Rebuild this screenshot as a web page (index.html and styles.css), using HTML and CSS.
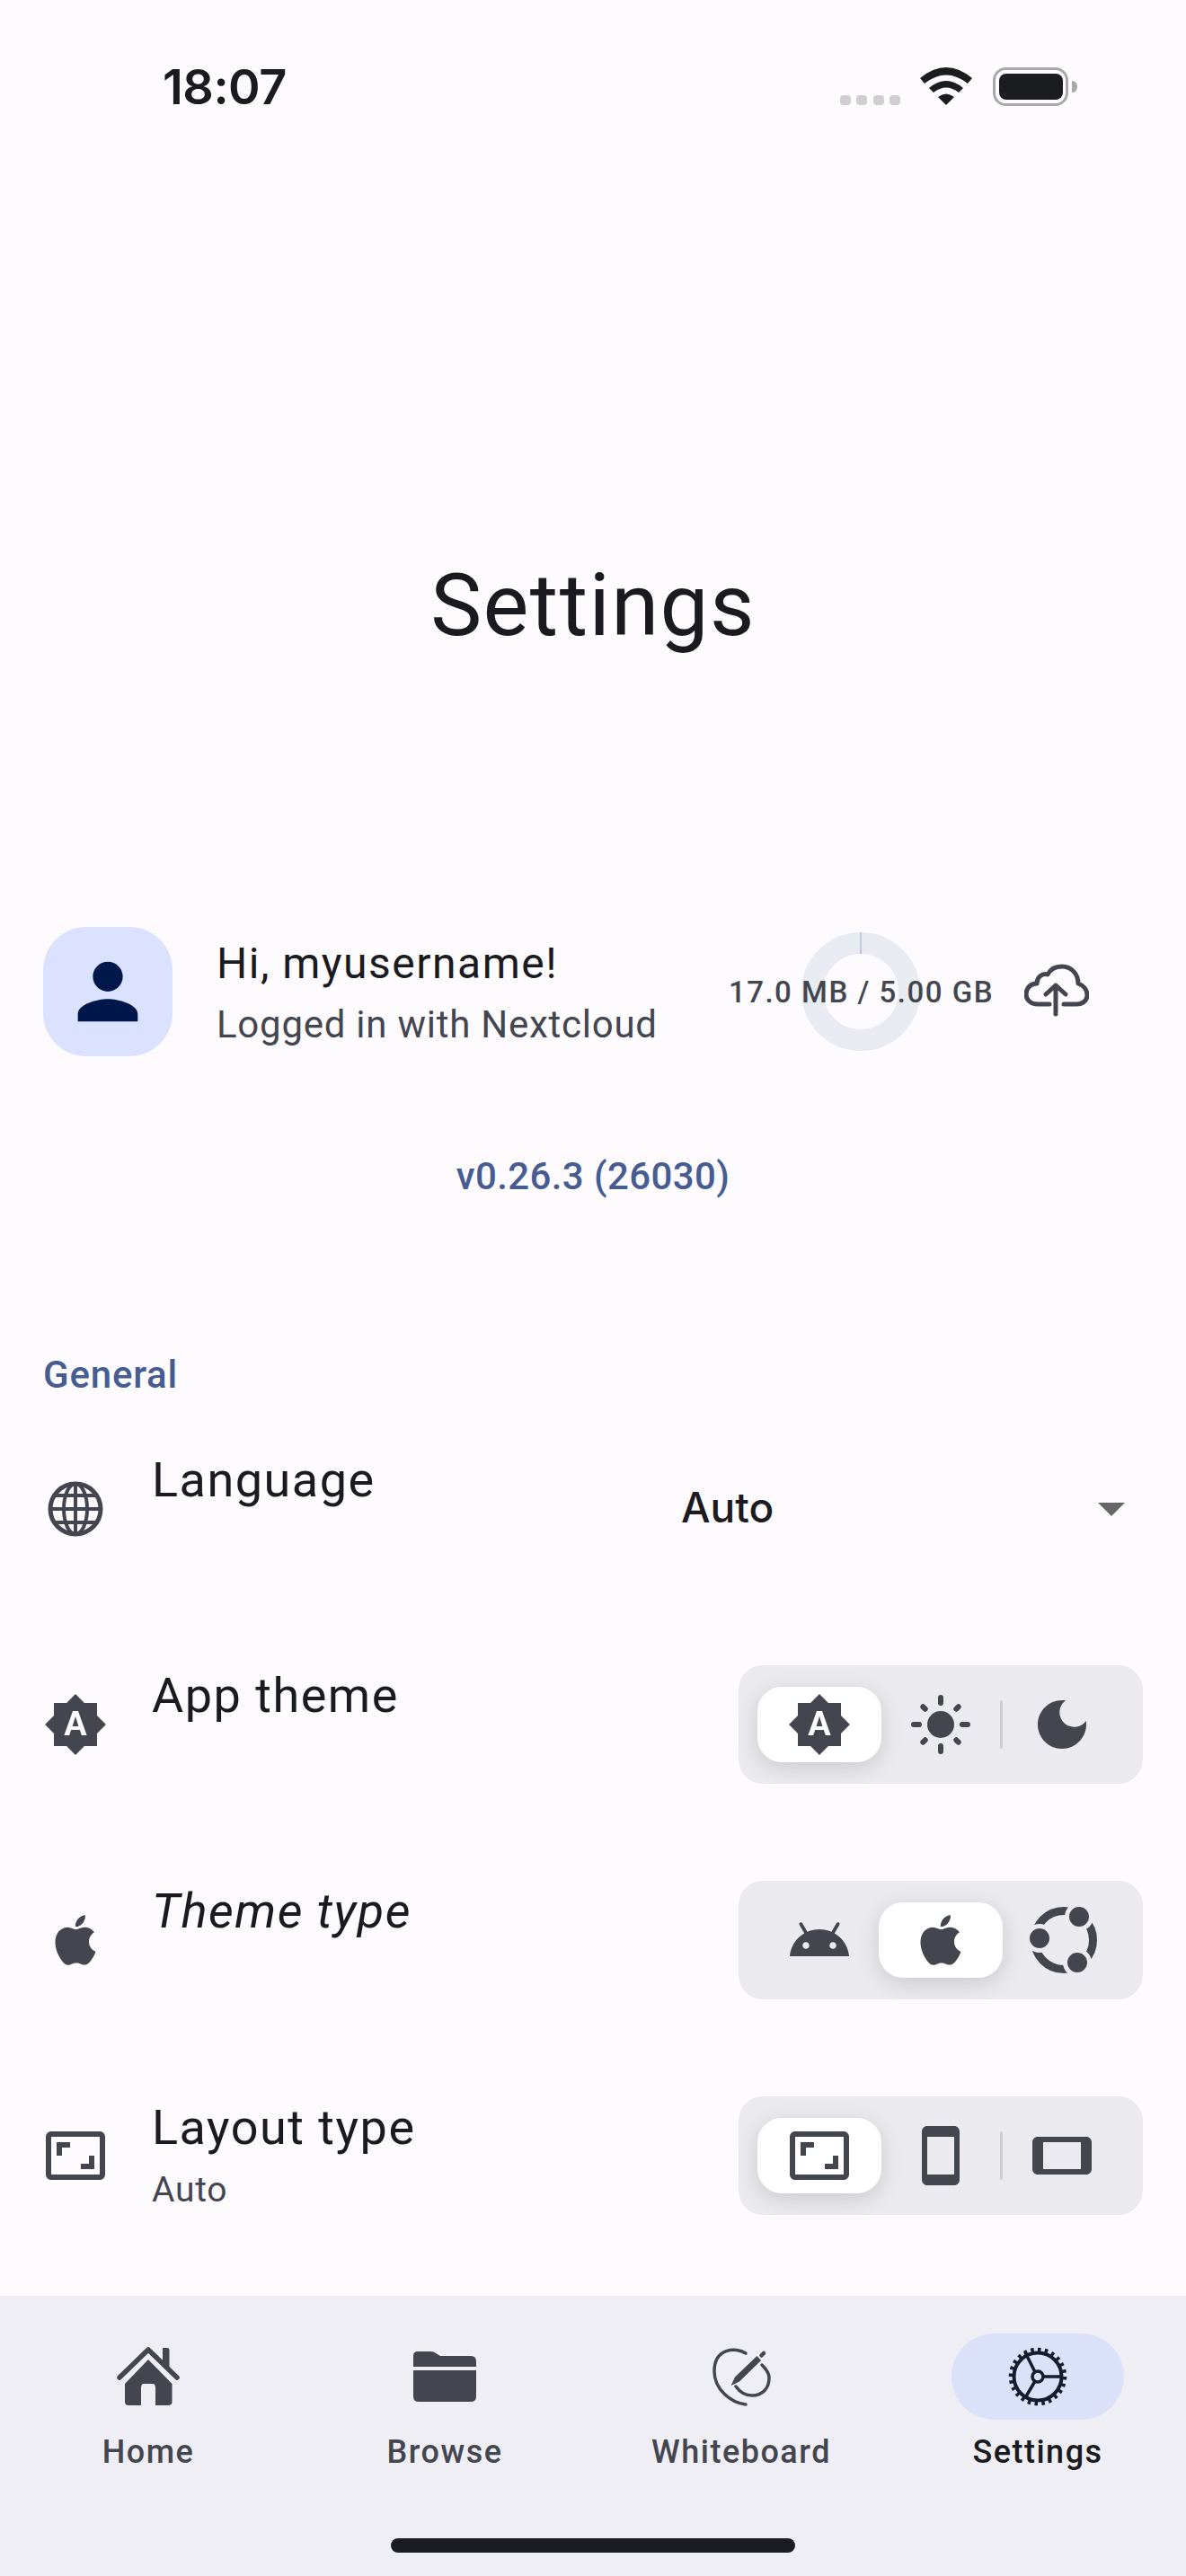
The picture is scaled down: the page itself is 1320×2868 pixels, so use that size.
FILE: index.html
```html
<!DOCTYPE html>
<html lang="en">
<head>
    <meta charset="UTF-8">
    <meta name="viewport" content="width=device-width, initial-scale=1.0">
    <title>Settings</title>
    <link rel="stylesheet" href="styles.css">
</head>
<body>
    <div class="screen">
        <div class="status-bar">
            <span class="time">18:07</span>
            <div class="signal"><i></i><i></i><i></i><i></i></div>
            <svg class="wifi" width="58" height="42" viewBox="0 0 58 42" fill="#1b1c20">
                <path d="M0 12Q29-12 58 12L53 18Q29-1 5 18Z"/>
                <path d="M10 23Q29 7 48 23L43 28Q29 17 15 28Z"/>
                <path d="M20 33Q29 26 38 33L29 42Z"/>
            </svg>
            <svg class="battery" width="94" height="43" viewBox="0 0 94 43">
                <rect x="1.5" y="1.5" width="81" height="40" rx="13" fill="none" stroke="#a8a8ac" stroke-width="3"/>
                <rect x="7" y="7" width="71" height="29" rx="8" fill="#1b1c20"/>
                <path d="M88 15c3 0 6 2 6 6.5S91 28 88 28Z" fill="#a8a8ac"/>
            </svg>
        </div>

        <h1 class="app-title">Settings</h1>

        <div class="account">
            <div class="avatar">
                <svg width="100" height="100" viewBox="0 0 24 24" fill="#00174b">
                    <path d="M12 12c2.21 0 4-1.79 4-4s-1.79-4-4-4-4 1.79-4 4 1.79 4 4 4zm-8 8h16v-2c0-2.66-5.33-4-8-4s-8 1.34-8 4z"/>
                </svg>
            </div>
            <div class="account-text">
                <div class="account-name">Hi, myusername!</div>
                <div class="account-sub">Logged in with Nextcloud</div>
            </div>
            <div class="storage">
                <svg class="ring" width="132" height="132" viewBox="0 0 132 132">
                    <circle cx="66" cy="66" r="54" fill="none" stroke="#e9ebf3" stroke-width="24"/>
                    <path d="M66 0V24" stroke="#b3bdd9" stroke-width="1.5"/>
                </svg>
                <span class="storage-text">17.0 MB / 5.00 GB</span>
            </div>
            <svg class="icon" width="72" height="72" viewBox="0 0 72 72" fill="none" stroke="#44464f" stroke-width="5" stroke-linecap="round" stroke-linejoin="round">
                <path d="M28 50H15C7 50 2 45 2 39 2 32 7 27 14 27 14 20 20 15 26 17 29 11 35 8 42 8 52 8 60 16 60 27 66 29 70 34 70 40 70 46 65 50 58 50H44"/>
                <path d="M35 61V29M24 39 35 29 46 39"/>
            </svg>
        </div>

        <div class="version">v0.26.3 (26030)</div>
        <div class="section-title">General</div>

        <div class="row">
            <svg class="row-icon" width="72" height="72" viewBox="0 0 72 72" fill="none" stroke="#44464f" stroke-width="4">
                <circle cx="36" cy="36" r="28" stroke-width="5"/>
                <ellipse cx="36" cy="36" rx="13" ry="28"/>
                <path d="M36 8V64M8 36H64M13 21H59M13 51H59"/>
            </svg>
            <div class="row-text">
                <div class="row-title">Language</div>
            </div>
            <div class="dropdown">
                <span class="dropdown-value">Auto</span>
                <span class="dropdown-arrow"></span>
            </div>
        </div>

        <div class="row">
            <svg class="row-icon" width="72" height="72" viewBox="0 0 24 24" fill="#44464f">
                <path d="M10.85 12.65h2.3L12 9l-1.15 3.65zM20 8.69V4h-4.69L12 .69 8.69 4H4v4.69L.69 12 4 15.31V20h4.69L12 23.31 15.31 20H20v-4.69L23.31 12 20 8.69zM14.3 16l-.7-2h-3.2l-.7 2H7.8L11 7h2l3.2 9h-1.9z"/>
            </svg>
            <div class="row-text">
                <div class="row-title">App theme</div>
            </div>
            <div class="segment">
                <div class="seg-item selected">
                    <svg width="72" height="72" viewBox="0 0 24 24" fill="#44464f">
                        <path d="M10.85 12.65h2.3L12 9l-1.15 3.65zM20 8.69V4h-4.69L12 .69 8.69 4H4v4.69L.69 12 4 15.31V20h4.69L12 23.31 15.31 20H20v-4.69L23.31 12 20 8.69zM14.3 16l-.7-2h-3.2l-.7 2H7.8L11 7h2l3.2 9h-1.9z"/>
                    </svg>
                </div>
                <div class="seg-item">
                    <svg width="72" height="72" viewBox="0 0 72 72" fill="#44464f" stroke="#44464f" stroke-width="6" stroke-linecap="round">
                        <circle cx="36" cy="36" r="15" stroke="none"/>
                        <path d="M6 36H12M60 36H66M36 6V12M36 60V66M16.3 16.3 18.7 18.7M53.3 53.3 55.7 55.7M55.7 16.3 53.3 18.7M18.7 53.3 16.3 55.7"/>
                    </svg>
                </div>
                <div class="seg-item divided">
                    <svg width="72" height="72" viewBox="0 0 24 24" fill="#44464f">
                        <path d="M12 3c-4.97 0-9 4.03-9 9s4.03 9 9 9 9-4.03 9-9c0-.46-.04-.92-.1-1.36-.98 1.37-2.58 2.26-4.4 2.26-2.98 0-5.4-2.42-5.4-5.4 0-1.81.89-3.42 2.26-4.4-.44-.06-.9-.1-1.36-.1z"/>
                    </svg>
                </div>
            </div>
        </div>

        <div class="row">
            <svg class="row-icon" width="72" height="72" viewBox="-1 -1 26 26" fill="#44464f">
                <path d="M18.71 19.5C17.88 20.74 17 21.95 15.66 21.97 14.32 22 13.89 21.18 12.37 21.18 10.84 21.18 10.37 21.95 9.1 22 7.79 22.05 6.8 20.68 5.96 19.47 4.25 17 2.94 12.45 4.7 9.39 5.57 7.87 7.13 6.91 8.82 6.88 10.1 6.86 11.32 7.75 12.11 7.75 12.89 7.75 14.37 6.68 15.92 6.84 16.57 6.87 18.39 7.1 19.56 8.82 19.47 8.88 17.39 10.1 17.41 12.63 17.44 15.65 20.06 16.66 20.09 16.67 20.06 16.74 19.67 18.11 18.71 19.5M13 3.5C13.73 2.67 14.94 2.04 15.94 2 16.07 3.17 15.6 4.35 14.9 5.19 14.21 6.04 13.07 6.7 11.95 6.61 11.8 5.46 12.36 4.26 13 3.5Z"/>
            </svg>
            <div class="row-text">
                <div class="row-title italic">Theme type</div>
            </div>
            <div class="segment">
                <div class="seg-item">
                    <svg width="72" height="72" viewBox="0 0 24 24" fill="#44464f">
                        <path d="M17.6 9.48l1.84-3.18c.16-.31.04-.69-.26-.85-.29-.15-.65-.06-.83.22l-1.88 3.24c-2.86-1.21-6.08-1.21-8.94 0L5.65 5.67c-.19-.29-.58-.38-.87-.2-.28.18-.37.54-.22.83L6.4 9.48C3.3 11.25 1.28 14.44 1 18h22c-.28-3.56-2.3-6.75-5.4-8.52zM7 15.25c-.69 0-1.25-.56-1.25-1.25s.56-1.25 1.25-1.25 1.25.56 1.25 1.25-.56 1.25-1.25 1.25zm10 0c-.69 0-1.25-.56-1.25-1.25s.56-1.25 1.25-1.25 1.25.56 1.25 1.25-.56 1.25-1.25 1.25z"/>
                    </svg>
                </div>
                <div class="seg-item selected">
                    <svg width="72" height="72" viewBox="-1 -1 26 26" fill="#44464f">
                        <path d="M18.71 19.5C17.88 20.74 17 21.95 15.66 21.97 14.32 22 13.89 21.18 12.37 21.18 10.84 21.18 10.37 21.95 9.1 22 7.79 22.05 6.8 20.68 5.96 19.47 4.25 17 2.94 12.45 4.7 9.39 5.57 7.87 7.13 6.91 8.82 6.88 10.1 6.86 11.32 7.75 12.11 7.75 12.89 7.75 14.37 6.68 15.92 6.84 16.57 6.87 18.39 7.1 19.56 8.82 19.47 8.88 17.39 10.1 17.41 12.63 17.44 15.65 20.06 16.66 20.09 16.67 20.06 16.74 19.67 18.11 18.71 19.5M13 3.5C13.73 2.67 14.94 2.04 15.94 2 16.07 3.17 15.6 4.35 14.9 5.19 14.21 6.04 13.07 6.7 11.95 6.61 11.8 5.46 12.36 4.26 13 3.5Z"/>
                    </svg>
                </div>
                <div class="seg-item">
                    <svg width="84" height="84" viewBox="0 0 84 84" fill="#44464f">
                        <circle cx="44" cy="42" r="32.500" fill="none" stroke="#44464f" stroke-width="9"/>
                        <g stroke="#ebebef" stroke-width="5">
                            <circle cx="61" cy="16" r="13.500"/>
                            <circle cx="17" cy="40" r="13.500"/>
                            <circle cx="59" cy="67" r="13.500"/>
                        </g>
                    </svg>
                </div>
            </div>
        </div>

        <div class="row">
            <svg class="row-icon" width="72" height="72" viewBox="0 0 24 24" fill="#44464f">
                <path d="M19 12h-2v3h-3v2h5v-5zM7 9h3V7H5v5h2V9zm14-6H3c-1.1 0-2 .9-2 2v14c0 1.1.9 2 2 2h18c1.1 0 2-.9 2-2V5c0-1.1-.9-2-2-2zm0 16.01H3V4.99h18v14.02z"/>
            </svg>
            <div class="row-text with-sub">
                <div class="row-title">Layout type</div>
                <div class="row-sub">Auto</div>
            </div>
            <div class="segment">
                <div class="seg-item selected">
                    <svg width="72" height="72" viewBox="0 0 24 24" fill="#44464f">
                        <path d="M19 12h-2v3h-3v2h5v-5zM7 9h3V7H5v5h2V9zm14-6H3c-1.1 0-2 .9-2 2v14c0 1.1.9 2 2 2h18c1.1 0 2-.9 2-2V5c0-1.1-.9-2-2-2zm0 16.01H3V4.99h18v14.02z"/>
                    </svg>
                </div>
                <div class="seg-item">
                    <svg width="72" height="72" viewBox="0 0 24 24" fill="#44464f">
                        <path d="M17 1.01L7 1c-1.1 0-1.99.9-1.99 2v18c0 1.1.89 2 1.99 2h10c1.1 0 2-.9 2-2V3c0-1.1-.9-1.99-2-1.99zM17 19H7V5h10v14z"/>
                    </svg>
                </div>
                <div class="seg-item divided">
                    <svg width="72" height="72" viewBox="0 0 24 24" fill="#44464f">
                        <path d="M1.01 7L1 17c0 1.1.9 2 2 2h18c1.1 0 2-.9 2-2V7c0-1.1-.9-2-2-2H3c-1.1 0-1.99.9-1.99 2zM19 7v10H5V7h14z"/>
                    </svg>
                </div>
            </div>
        </div>

        <nav class="bottom-nav">
            <div class="nav-items">
                <div class="nav-item">
                    <div class="nav-pill">
                        <svg width="72" height="72" viewBox="0 0 72 72" fill="#44464f">
                            <path d="M36 17 10 44V64Q10 68 14 68H28V49Q28 44 31 44H41Q44 44 44 49V68H58Q62.500 68 62.500 64V44Z"/>
                            <path d="M52 4H57Q59.500 4 59.500 6.500V25H52Z"/>
                            <path d="M4 37 36 6 68 37" fill="none" stroke="#44464f" stroke-width="5.500" stroke-linecap="round" stroke-linejoin="round"/>
                        </svg>
                    </div>
                    <span class="nav-label">Home</span>
                </div>
                <div class="nav-item">
                    <div class="nav-pill">
                        <svg width="72" height="72" viewBox="0 0 72 72" fill="#44464f">
                            <path d="M1 25V13Q1 8 6 8H20Q24 8 26 10L31 13H65Q71 13 71 19V25Z"/>
                            <path d="M1 29H71V58Q71 64 65 64H7Q1 64 1 58Z"/>
                        </svg>
                    </div>
                    <span class="nav-label">Browse</span>
                </div>
                <div class="nav-item">
                    <div class="nav-pill">
                        <svg width="72" height="72" viewBox="0 0 72 72" fill="none" stroke="#44464f" stroke-width="3.500" stroke-linecap="round">
                            <path d="M41 10C30 3 6 4 6 30 6 50 24 65 41 67"/>
                            <path d="M30 47C35 54 42 57 48 57 60 57 67 49 67 37 67 32 63 27 59 23"/>
                            <path d="M24.600 46 29 36.500 53.500 13 58 18 34 41.500Z" fill="#44464f" stroke="none"/>
                            <path d="M58.500 12.500 61 10" stroke-width="4.500"/>
                        </svg>
                    </div>
                    <span class="nav-label">Whiteboard</span>
                </div>
                <div class="nav-item active">
                    <div class="nav-pill">
                        <svg width="72" height="72" viewBox="0 0 72 72" fill="none" stroke="#151c2e" stroke-width="3.500">
                            <circle cx="36" cy="36" r="26.500" stroke-width="4"/>
                            <circle cx="36" cy="36" r="30" stroke-width="4.500" pathLength="24" stroke-dasharray=".45 .55"/>
                            <circle cx="36" cy="36" r="6"/>
                            <path d="M42 36H63M33 31 22 9M33 41 23 58"/>
                        </svg>
                    </div>
                    <span class="nav-label">Settings</span>
                </div>
            </div>
            <div class="home-indicator"></div>
        </nav>
    </div>
</body>
</html>
```

FILE: styles.css
```css
body {
    margin: 0;
    font-family: 'Roboto', sans-serif;
    color: #1a1b20;
    background-color: #fefbff;
}

.screen {
    width: 1320px;
    height: 2868px;
    display: flex;
    flex-direction: column;
    overflow: hidden;
}

/* status bar */
.status-bar {
    height: 160px;
    box-sizing: border-box;
    padding: 67px 121px 0 181px;
    display: flex;
    align-items: flex-start;
}

.time {
    font-family: 'Inter', sans-serif;
    font-weight: 600;
    font-size: 54px;
    line-height: 60px;
    letter-spacing: -0.5px;
    margin-right: auto;
}

.signal {
    display: flex;
    gap: 6.5px;
    margin-top: 39px;
}

.signal i {
    display: block;
    width: 12px;
    height: 11px;
    border-radius: 4px;
    background-color: #cfcfd3;
}

.wifi {
    margin: 8px 0 0 22px;
}

.battery {
    margin: 8px 0 0 23px;
}

.app-title {
    margin: 458px 0 0;
    font-size: 96px;
    line-height: 112px;
    font-weight: 400;
    letter-spacing: 1.4px;
    text-align: center;
}

/* account */
.account {
    margin-top: 302px;
    padding: 0 108px 0 48px;
    display: flex;
    align-items: center;
}

.avatar {
    width: 144px;
    height: 144px;
    border-radius: 48px;
    background-color: #dae2ff;
    display: flex;
    align-items: center;
    justify-content: center;
}

.account-text {
    margin-left: 49px;
    margin-right: auto;
}

.account-name {
    font-size: 48px;
    line-height: 66px;
    letter-spacing: 1.5px;
}

.account-sub {
    margin-top: 7px;
    font-size: 42px;
    line-height: 56px;
    letter-spacing: 0.75px;
    color: #44464f;
}

.storage {
    display: grid;
    place-items: center;
    margin-right: 34px;
}

.ring, .storage-text {
    grid-area: 1 / 1;
}

.storage-text {
    font-size: 33px;
    font-weight: 500;
    letter-spacing: 1.5px;
    color: #44464f;
    position: relative;
}

.version {
    margin-top: 104px;
    font-size: 42px;
    line-height: 60px;
    font-weight: 500;
    letter-spacing: 0.4px;
    text-align: center;
    color: #475d92;
}

.section-title {
    margin-top: 162px;
    padding-left: 48px;
    font-size: 42px;
    line-height: 58px;
    font-weight: 500;
    letter-spacing: 0.8px;
    color: #475d92;
}

/* settings rows */
.row {
    height: 240px;
    padding: 0 48px;
    display: flex;
    align-items: center;
}

.row-icon {
    flex-shrink: 0;
}

.row-text {
    margin-left: 49px;
    min-height: 128px;
    margin-right: auto;
}

.row-text.with-sub {
    padding-top: 2px;
}

.row-title {
    font-size: 54px;
    line-height: 64px;
    letter-spacing: 1.5px;
}

.row-title.italic {
    font-style: italic;
}

.row-sub {
    margin-top: 12px;
    font-size: 39px;
    line-height: 50px;
    letter-spacing: 0.75px;
    color: #44464f;
}

.dropdown {
    width: 514px;
    box-sizing: border-box;
    padding-right: 20px;
    display: flex;
    align-items: center;
    justify-content: space-between;
}

.dropdown-value {
    font-family: 'Inter', sans-serif;
    font-size: 46px;
    font-weight: 500;
    color: #1c1b1f;
    margin-bottom: 4px;
}

.dropdown-arrow {
    width: 0;
    height: 0;
    border-left: 15px solid transparent;
    border-right: 15px solid transparent;
    border-top: 15px solid #666666;
}

.segment {
    width: 450px;
    height: 132px;
    box-sizing: border-box;
    padding: 0 22.5px;
    border-radius: 27px;
    background-color: #ebebef;
    display: flex;
    align-items: center;
}

.seg-item {
    width: 135px;
    height: 84px;
    flex-shrink: 0;
    display: flex;
    align-items: center;
    justify-content: center;
    position: relative;
}

.seg-item.selected {
    width: 138px;
    margin: 0 -1.5px;
    border-radius: 27px;
    background-color: #ffffff;
    box-shadow: 0 6px 24px rgba(0, 0, 0, 0.14);
    z-index: 1;
}

.seg-item.divided::before {
    content: "";
    position: absolute;
    left: -2px;
    top: 15px;
    width: 3px;
    height: 54px;
    border-radius: 2px;
    background-color: #cfced3;
}

/* bottom navigation */
.bottom-nav {
    margin-top: auto;
    height: 312px;
    box-sizing: border-box;
    padding-top: 42px;
    background-color: #eeeef4;
    display: flex;
    flex-direction: column;
    align-items: center;
}

.nav-items {
    width: 100%;
    display: flex;
}

.nav-item {
    flex: 1;
    display: flex;
    flex-direction: column;
    align-items: center;
}

.nav-pill {
    width: 192px;
    height: 96px;
    border-radius: 48px;
    display: flex;
    align-items: center;
    justify-content: center;
}

.nav-item.active .nav-pill {
    background-color: #dbe1f9;
}

.nav-label {
    margin-top: 12px;
    font-size: 36px;
    line-height: 48px;
    font-weight: 500;
    letter-spacing: 1.5px;
    color: #44464f;
}

.nav-item.active .nav-label {
    color: #1a1b20;
}

.home-indicator {
    width: 450px;
    height: 16px;
    margin-top: 72px;
    border-radius: 8px;
    background-color: #1b1c20;
}
```
